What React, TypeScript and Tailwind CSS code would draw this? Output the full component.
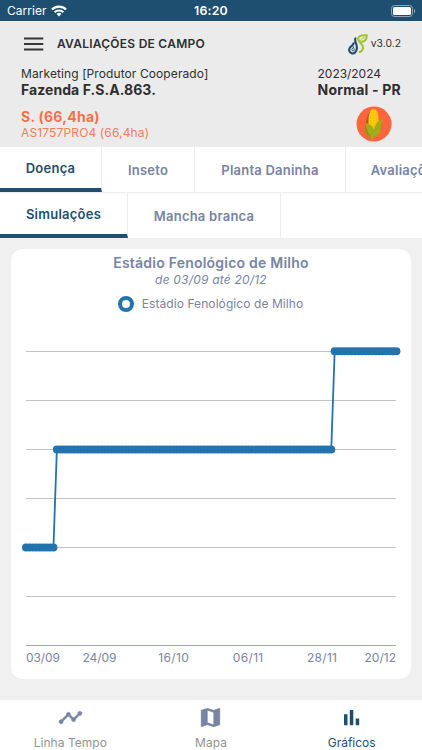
import React from "react";

const DAYS = 108;
const STEP = 370.4 / DAYS;

function stage(day: number): number {
  if (day <= 8) return 547.5;
  if (day <= 89) return 449.5;
  return 351.3;
}

const points = Array.from({ length: DAYS + 1 }, (_, d) => ({
  x: 26 + d * STEP - 11,
  y: stage(d) - 320,
}));

const gridLines = [31.5, 80.5, 129.5, 178.5, 227.5, 276.5];

const ticks = [
  { label: "03/09", x: 15, anchor: "start" as const, width: 34 },
  { label: "24/09", x: 88.5, anchor: "middle" as const, width: 34 },
  { label: "16/10", x: 162.5, anchor: "middle" as const, width: 30.5 },
  { label: "06/11", x: 237, anchor: "middle" as const, width: 30.5 },
  { label: "28/11", x: 311, anchor: "middle" as const, width: 30 },
  { label: "20/12", x: 385, anchor: "end" as const, width: 31.5 },
];

function StatusBar() {
  return (
    <div className="relative flex h-[21px] shrink-0 items-center justify-between bg-[#1e4f70] pl-[7px] pr-[6px] text-white">
      <div className="flex items-center gap-[4px]">
        <span className="text-[12px] leading-[22px] tracking-[0.05px]">Carrier</span>
        <svg width="16" height="12" viewBox="0 0 16 12" fill="none" stroke="white">
          <path d="M1 4.5a10 10 0 0 1 14 0" strokeWidth="2.3" />
          <path d="M3.7 7.3a6.1 6.1 0 0 1 8.6 0" strokeWidth="2.1" />
          <path d="M5.6 9a3.5 3.5 0 0 1 4.8 0L8 11.5z" fill="white" stroke="none" />
        </svg>
      </div>
      <span className="absolute left-0 w-full text-center text-[12.3px] font-semibold leading-[22px] tracking-[0.2px]">16:20</span>
      <svg width="25" height="12" viewBox="0 0 25 12">
        <rect x="0.5" y="0.5" width="21" height="11" rx="3" fill="none" stroke="#8fa6b7" />
        <rect x="2" y="2" width="18" height="8" rx="1.5" fill="white" />
        <path d="M23 4a2.2 2.2 0 0 1 0 4z" fill="#8fa6b7" />
      </svg>
    </div>
  );
}

function Logo() {
  return (
    <svg width="20" height="21" viewBox="0 0 20 21" fill="none" strokeLinecap="round" strokeLinejoin="round">
      <path d="M7.4 4.4C6 7.4 9.4 10 8.9 14.4C8.4 18.2 6.2 19.8 4 19.4C.9 18.9.3 15.2 2.4 13.1C3.6 12 5 11.3 5.6 9.2" stroke="#204c6c" strokeWidth="2.1" />
      <path d="M5.6 13.2c-2.3 1.1-2.2 3.7-.7 3.8 1.5.1 1.7-1.9.7-3.8z" stroke="#204c6c" strokeWidth=".9" />
      <path d="M11.8 18c3.2-1.4 3.9-4.1 2.5-6.8C12.9 8.6 9.8 7.3 10.1 4.5 10.7 2 14.6 1 18.8 1.4c-.2 3.9-1.9 6.2-5.3 6.6" stroke="#a1c62c" strokeWidth="2.1" />
      <path d="M12.6 6.6c.8-1.8 2.1-2.7 3.6-3.2" stroke="#a1c62c" strokeWidth="1" />
    </svg>
  );
}

function CornBadge() {
  return (
    <svg width="36" height="36" viewBox="0 0 36 36">
      <circle cx="18" cy="18" r="17.5" fill="#fd663d" />
      <path d="M14 5.5C10.5 10 10 16 9.6 20L15 31l2-6z" fill="#b9542b" />
      <path d="M14.2 5.5C15.2 2.3 19.4 2 20.8 5C23.2 10 23 18 21 25L14 25.5C11.8 19 12 10 14.2 5.500z" fill="#fdc90d" />
      <g stroke="#e6aa08" strokeWidth=".6" strokeDasharray="1.2 1.4" fill="none">
        <path d="M15.5 6c-1.500 6-1 13 .2 17M18 4v18M20.300 7c.8 6 0 11-1 14" />
      </g>
      <path d="M9.600 17C8.200 23.500 9.500 29 14.700 30.500L15.300 33.500H17.200L17.300 30.700C23.500 30 25 25.500 24.800 20.500C24.800 17.500 26.500 16.500 27 13.800C22 13.800 19.500 18 18 23.500C16.500 20 13 17.500 9.600 17z" fill="#a1ad16" />
      <path d="M9.600 17C10 22.500 12 27.500 15.300 30.600C9.500 29.500 8 24 9.600 17z" fill="#849510" />
    </svg>
  );
}

function Header() {
  return (
    <header className="h-[126px] shrink-0 bg-[#ebebeb] text-[#2f2f2f]">
      <div className="flex h-[46px] items-center pl-6 pr-[21px]">
        <svg width="20" height="14" viewBox="0 0 20 14" stroke="#373737" strokeWidth="2">
          <path d="M0 1.5h19.3M0 7h19.3M0 12.5h19.3" />
        </svg>
        <h1 className="ml-[13px] text-[12px] font-semibold tracking-[0.25px]">AVALIAÇÕES DE CAMPO</h1>
        <div className="ml-auto flex items-center gap-[3px]">
          <Logo />
          <span className="text-[10.3px] tracking-[0.03px]">v3.0.2</span>
        </div>
      </div>
      <div className="flex justify-between pl-[21px] pr-[21px]">
        <div>
          <p className="text-[12px] leading-[14px] tracking-[0.09px]">Marketing [Produtor Cooperado]</p>
          <p className="text-[14px] font-bold leading-[17px] tracking-[0.06px]">Fazenda F.S.A.863.</p>
          <p className="mt-[10px] text-[14px] font-bold leading-[17px] tracking-[0.25px] text-[#f57049]">S. (66,4ha)</p>
          <p className="text-[12px] leading-[15px] tracking-[0.14px] text-[#f57c59]">AS1757PRO4 (66,4ha)</p>
        </div>
        <div>
          <p className="text-[12px] leading-[14px] tracking-[-0.04px]">2023/2024</p>
          <p className="text-[14px] font-bold leading-[17px] tracking-[0.2px]">Normal - PR</p>
          <div className="mt-[8px] flex justify-end pr-[9px]"><CornBadge /></div>
        </div>
      </div>
    </header>
  );
}

function Tab({ label, active = false, className }: { label: string; active?: boolean; className: string }) {
  return (
    <div className={`flex h-[45px] shrink-0 items-center justify-center border-r border-r-[#ededed] text-[13px] font-semibold ${active ? "border-b-4 border-b-[#1e4f70] pt-[2px] tracking-[0.25px] text-[#1e4f70]" : "pt-[2px] tracking-[0.23px] text-[#7784a4]"} ${className}`}>
      <span className="whitespace-nowrap">{label}</span>
    </div>
  );
}

function Chart() {
  return (
    <section className="ml-[11px] mt-[11px] h-[430px] w-[400px] rounded-[12px] bg-white text-center text-[#7784a4]">
      <h2 className="pt-[5px] text-[14px] font-semibold leading-[18px] tracking-[0.22px]">Estádio Fenológico de Milho</h2>
      <p className="text-[12px] italic leading-[15px] tracking-[0.2px]">de 03/09 até 20/12</p>
      <div className="mt-[8px] flex h-[18px] items-center justify-center gap-[8px] pr-[1px]">
        <span className="h-4 w-4 rounded-full border-4 border-[#2373ad]" />
        <span className="text-[12px] tracking-[0.08px]">Estádio Fenológico de Milho</span>
      </div>
      <svg className="mt-[7px]" width="400" height="348" viewBox="0 0 400 348">
        {gridLines.map((y) => <path key={y} d={`M15 ${y}H385`} stroke="#c3c3c3" />)}
        <path d="M15 325.5H385" stroke="#a0a8b8" />
        <polyline points={points.map((p) => `${p.x},${p.y}`).join(" ")} fill="none" stroke="#2373ad" strokeWidth="1.8" />
        {points.map((p, i) => <circle key={i} cx={p.x} cy={p.y} r="4" fill="#2373ad" />)}
        {ticks.map((t) => (
          <text key={t.label} x={t.x} y="341.5" textAnchor={t.anchor} textLength={t.width} fontSize="12" fill="#7784a4">{t.label}</text>
        ))}
      </svg>
    </section>
  );
}

function BottomNav() {
  return (
    <nav className="grid h-[50px] shrink-0 grid-cols-3 bg-white text-center text-[12px] text-[#929292]">
      <div className="flex flex-col items-center">
        <svg className="mt-[5px]" width="25" height="25" viewBox="0 0 24 24" fill="#7784a4" stroke="#7784a4" strokeWidth="0.5">
          <path d="M23 8c0 1.1-.9 2-2 2-.18 0-.35-.02-.51-.07l-3.56 3.55c.05.16.07.34.07.52 0 1.1-.9 2-2 2s-2-.9-2-2c0-.18.02-.36.07-.52l-2.55-2.55c-.16.05-.34.07-.52.07s-.36-.02-.52-.07l-4.55 4.56c.05.16.07.33.07.51 0 1.1-.9 2-2 2s-2-.9-2-2 .9-2 2-2c.18 0 .35.02.51.07l4.56-4.55C8.02 9.36 8 9.18 8 9c0-1.1.9-2 2-2s2 .9 2 2c0 .18-.02.36-.07.52l2.55 2.55c.16-.05.34-.07.52-.07s.36.02.52.07l3.55-3.56C19.02 8.35 19 8.18 19 8c0-1.1.9-2 2-2s2 .9 2 2z" />
        </svg>
        <span className="mt-[4px] leading-[17px] tracking-[0.03px]">Linha Tempo</span>
      </div>
      <div className="flex flex-col items-center">
        <svg className="mt-[5px]" width="25" height="25" viewBox="0 0 24 24" fill="#7784a4" stroke="#7784a4" strokeWidth="0.4">
          <path d="M20.5 3l-.16.03L15 5.1 9 3 3.36 4.9c-.21.07-.36.25-.36.48V20.5c0 .28.22.5.5.5l.16-.03L9 18.9l6 2.1 5.64-1.9c.21-.07.36-.25.36-.48V3.5c0-.28-.22-.5-.5-.5zM15 19l-6-2.11V5l6 2.11V19z" />
        </svg>
        <span className="mt-[4px] leading-[17px]">Mapa</span>
      </div>
      <div className="flex flex-col items-center text-[#1e4f70]">
        <svg className="mt-[5px]" width="25" height="25" viewBox="0 0 25 25" fill="#1e4f70">
          <path d="M5 9.2h3.5V20.2H5zM10.8 5h3.5v15.2h-3.5zM16.7 13.5H20.2v6.7h-3.5z" />
        </svg>
        <span className="mt-[4px] leading-[17px]">Gráficos</span>
      </div>
    </nav>
  );
}

export default function App() {
  return (
    <div className="flex h-[750px] w-[422px] flex-col overflow-hidden bg-[#f0f0f0] font-['Inter',sans-serif]">
      <StatusBar />
      <Header />
      <div className="flex h-[46px] shrink-0 overflow-hidden border-b border-[#ededed] bg-white">
        <Tab label="Doença" active className="w-[102px]" />
        <Tab label="Inseto" className="w-[93px]" />
        <Tab label="Planta Daninha" className="w-[151px]" />
        <Tab label="Avaliações" className="w-[121px]" />
      </div>
      <div className="flex h-[45px] shrink-0 bg-white">
        <Tab label="Simulações" active className="w-[128px]" />
        <Tab label="Mancha branca" className="w-[153px]" />
      </div>
      <main className="flex-1"><Chart /></main>
      <BottomNav />
    </div>
  );
}
